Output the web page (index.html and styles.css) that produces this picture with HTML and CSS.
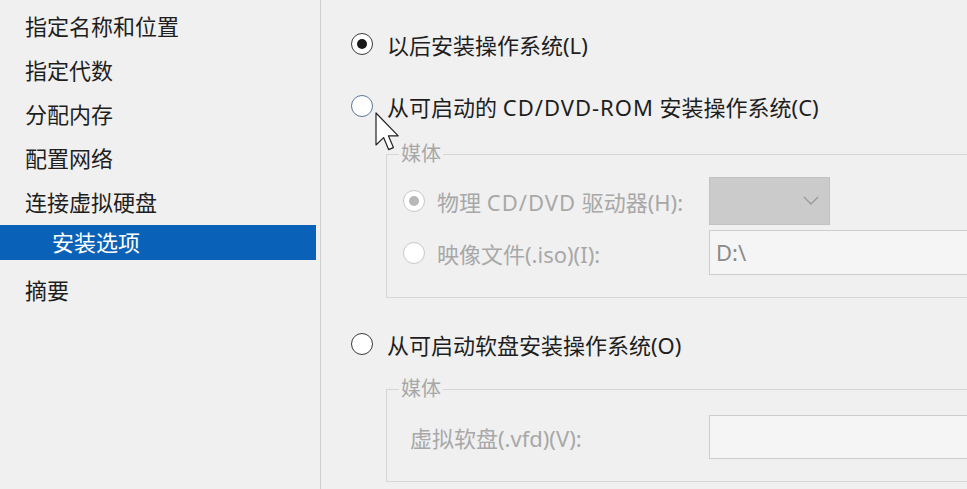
FILE: index.html
```html
<!DOCTYPE html>
<html>
<head>
  <title>新建虚拟机向导</title>
  <link rel="stylesheet" href="styles.css">
</head>
<body>

  <div class="wizard">
    <nav class="steps">
      <div class="step">指定名称和位置</div>
      <div class="step">指定代数</div>
      <div class="step">分配内存</div>
      <div class="step">配置网络</div>
      <div class="step">连接虚拟硬盘</div>
      <div class="step sub active">安装选项</div>
      <div class="step">摘要</div>
    </nav>

    <main class="options">
      <label class="option">
        <span class="radio checked"></span>
        <span>以后安装操作系统(L)</span>
      </label>

      <label class="option gap-a">
        <span class="radio hover"></span>
        <span>从可启动的 <span class="latin">CD/DVD-ROM</span> 安装操作系统(C)</span>
      </label>

      <fieldset class="media media-cd">
        <legend>媒体</legend>
        <div class="media-row">
          <label class="sub-option">
            <span class="radio disabled checked"></span>
            <span>物理 <span class="latin">CD/DVD</span> 驱动器(H):</span>
          </label>
          <div class="select">
            <svg width="16" height="10" viewBox="0 0 16 10"><path d="M1 1 L8 8 L15 1" fill="none" stroke="#9a9a9a" stroke-width="1.4"/></svg>
          </div>
        </div>
        <div class="media-row second">
          <label class="sub-option">
            <span class="radio disabled"></span>
            <span>映像文件(.iso)(I):</span>
          </label>
          <div class="textbox">D:\</div>
        </div>
      </fieldset>

      <label class="option gap-c">
        <span class="radio"></span>
        <span>从可启动软盘安装操作系统(O)</span>
      </label>

      <fieldset class="media media-floppy">
        <legend>媒体</legend>
        <div class="media-row">
          <span class="sub-label">虚拟软盘(.vfd)(V):</span>
          <div class="textbox short"></div>
        </div>
      </fieldset>

      <!-- mouse pointer hovering the second option -->
      <svg class="cursor" width="24" height="40" viewBox="0 0 12 20">
        <path d="M0.5 0.5 L0.5 16.5 L4.3 12.8 L6.8 18.8 L9.2 17.8 L6.7 11.9 L11.6 11.9 Z" fill="#fff" stroke="#222" stroke-width="0.6" stroke-linejoin="round"/>
      </svg>
    </main>
  </div>

</body>
</html>
```

FILE: styles.css
```css
* { box-sizing: border-box; margin: 0; padding: 0; }

body {
  font-family: "Noto Sans", "Noto Sans CJK SC", sans-serif;
  background: #f0f0f0;
  color: #1e1e1e;
  width: 967px;
  height: 489px;
  overflow: hidden;
}

.wizard {
  display: flex;
  height: 489px;
}

/* left step list */
.steps {
  width: 321px;
  flex-shrink: 0;
  border-right: 1px solid #cfcfcf;
  padding: 4px 4px 0 0;
  background: #f0f0f0;
}

.step {
  height: 44px;
  line-height: 44px;
  padding-left: 25px;
  font-size: 22px;
  white-space: nowrap;
}

.step.sub {
  padding-left: 52px;
}

.step.active {
  height: 35px;
  line-height: 35px;
  margin: 1px 0 8px;
  background: #0a62b8;
  color: #fff;
}

/* right option pane */
.options {
  position: relative;
  flex: 1;
  overflow: hidden;
  padding: 24px 0 0 30px;
  font-size: 22px;
}

.option {
  display: flex;
  align-items: center;
  gap: 14px;
  height: 40px;
  white-space: nowrap;
}

.latin {
  letter-spacing: 1px;
}

.gap-a { margin-top: 22px; }
.gap-c { margin-top: 26px; }

.radio {
  width: 22px;
  height: 22px;
  border-radius: 50%;
  border: 1.5px solid #3a3a3a;
  background: #fff;
  flex-shrink: 0;
  display: flex;
  align-items: center;
  justify-content: center;
}

.radio.checked::after {
  content: "";
  width: 10px;
  height: 10px;
  border-radius: 50%;
  background: #1a1a1a;
}

.radio.hover {
  border-color: #5b7898;
}

.radio.disabled {
  border-color: #c8c8c8;
}

.radio.disabled.checked::after {
  background: #b8b8b8;
}

/* media group boxes */
.media {
  border: 1px solid #d6d6d6;
  margin: 17px -60px 0 35px;
  padding: 12px 0 22px 16px;
  min-width: 0;
  color: #a8a8a8;
  font-size: 22px;
}

.media legend {
  font-size: 20px;
  line-height: 22px;
  padding: 0 2px;
  margin-left: -4px;
}

.media-floppy {
  margin-top: 14px;
  padding-top: 15px;
}

.media-row {
  display: flex;
  align-items: center;
}

.media-row.second {
  margin-top: 5px;
}

.sub-option {
  display: flex;
  align-items: center;
  gap: 12px;
  width: 306px;
  white-space: nowrap;
}

.sub-label {
  width: 306px;
  padding-left: 7px;
  white-space: nowrap;
}

.select {
  width: 121px;
  height: 48px;
  background: #cbcbcb;
  border: 1px solid #c2c2c2;
  display: flex;
  align-items: center;
  justify-content: flex-end;
  padding-right: 10px;
}

.textbox {
  flex: 1;
  height: 45px;
  border: 1px solid #cdcdcd;
  background: #f5f5f5;
  padding-left: 6px;
  line-height: 43px;
  color: #8a8a8a;
}

.textbox.short {
  height: 44px;
}

.cursor {
  position: absolute;
  left: 54px;
  top: 112px;
}
```
